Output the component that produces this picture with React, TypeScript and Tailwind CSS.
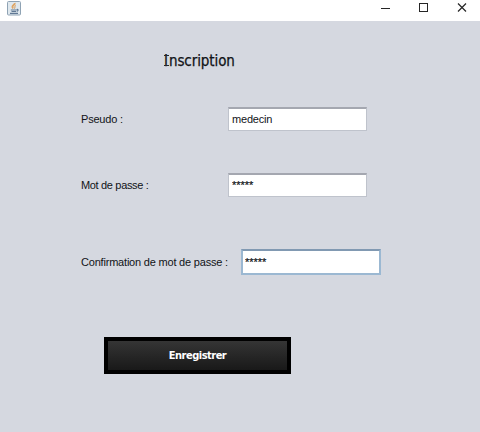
import React from "react";

function JavaIcon() {
  return (
    <svg width="14" height="15" viewBox="0 0 14 15" fill="none">
      <rect x="0.5" y="0.5" width="13" height="13.5" rx="1" fill="#dfe8ee" stroke="#8fa3b4" />
      <path d="M7.800 2C8.500 4 3.500 4.500 6.200 7.500" stroke="#dfa463" strokeWidth="1.800" />
      <path d="M8.800 4.500C6.800 5.500 8.600 6.500 7.500 7.700" stroke="#d99a55" />
      <path d="M3.800 9h5.700M4.500 10.500h4.500M3 12.300h8M9.700 8.500c2-.4 1.600 1.400 0 1.900" stroke="#607894" strokeWidth="1.200" />
    </svg>
  );
}

function TitleBar() {
  return (
    <header className="flex h-[21px] justify-between bg-white">
      <div className="pl-[7px] pt-px"><JavaIcon /></div>
      <svg width="110" height="21" viewBox="0 0 110 21" fill="none" stroke="#252525">
        <path d="M11 8.500h9" />
        <rect x="49.500" y="3.500" width="8" height="8" />
        <path d="M88 3.500l8 8M96 3.500l-8 8" strokeWidth="1.200" />
      </svg>
    </header>
  );
}

function Field({ label, value, labelClass, inputClass }: {
  label: string; value: string; labelClass: string; inputClass: string;
}) {
  return (
    <label className="flex items-center">
      <span className={`shrink-0 whitespace-nowrap ${labelClass}`}>{label}</span>
      <input readOnly value={value} className={`block bg-white text-[11px] outline-none ${inputClass}`} />
    </label>
  );
}

export default function App() {
  return (
    <div className="h-[432px] w-[480px] overflow-hidden bg-[#d5d8e0] font-['Liberation_Sans',Arial,sans-serif] text-[11px] text-[#111317]">
      <TitleBar />
      <main className="flex flex-col items-start pl-[81px]">
        <h1 className="ml-[83px] mt-[30px] h-5 whitespace-nowrap font-['DejaVu_Sans_Condensed','DejaVu_Sans',sans-serif] text-[15px] leading-5 tracking-[-0.08px] [-webkit-text-stroke:0.25px_#111317] [font-stretch:condensed]">
          <span className="relative mr-px inline-block before:absolute before:left-0 before:top-[4px] before:h-px before:w-[5px] before:bg-[#25282d] after:absolute after:bottom-[5px] after:left-0 after:h-px after:w-[5px] after:bg-[#25282d]">I</span>nscription
        </h1>
        <div className="mt-[36px]">
          <Field label="Pseudo :" value="medecin" labelClass="w-[147px] tracking-[-0.2px]" inputClass="h-6 w-[139px] border border-t-2 border-[#bfc3cc] border-t-[#a4a7b0] px-[3px] pb-[2px] tracking-[-0.2px]" />
        </div>
        <div className="mt-[42px]">
          <Field label="Mot de passe :" value="*****" labelClass="w-[147px] tracking-[-0.33px]" inputClass="h-6 w-[139px] border border-t-2 border-[#bfc3cc] border-t-[#a4a7b0] px-[3px] pb-px [-webkit-text-stroke:0.2px_#111317]" />
        </div>
        <div className="mt-[52px]">
          <Field label="Confirmation de mot de passe :" value="*****" labelClass="w-[160px] tracking-[-0.2px]" inputClass="h-[26px] w-[140px] border-2 border-[#9bb8d2] border-t-[#8199b2] px-[2px] [-webkit-text-stroke:0.2px_#111317]" />
        </div>
        <button className="ml-[23px] mt-[62px] h-[37px] w-[187px] border-4 border-black bg-linear-to-b from-[#353535] to-[#191919] pt-px font-['DejaVu_Sans_Condensed','DejaVu_Sans',sans-serif] text-[11px] font-bold tracking-[-0.5px] text-white [font-stretch:condensed]">
          Enregistrer
        </button>
      </main>
    </div>
  );
}
